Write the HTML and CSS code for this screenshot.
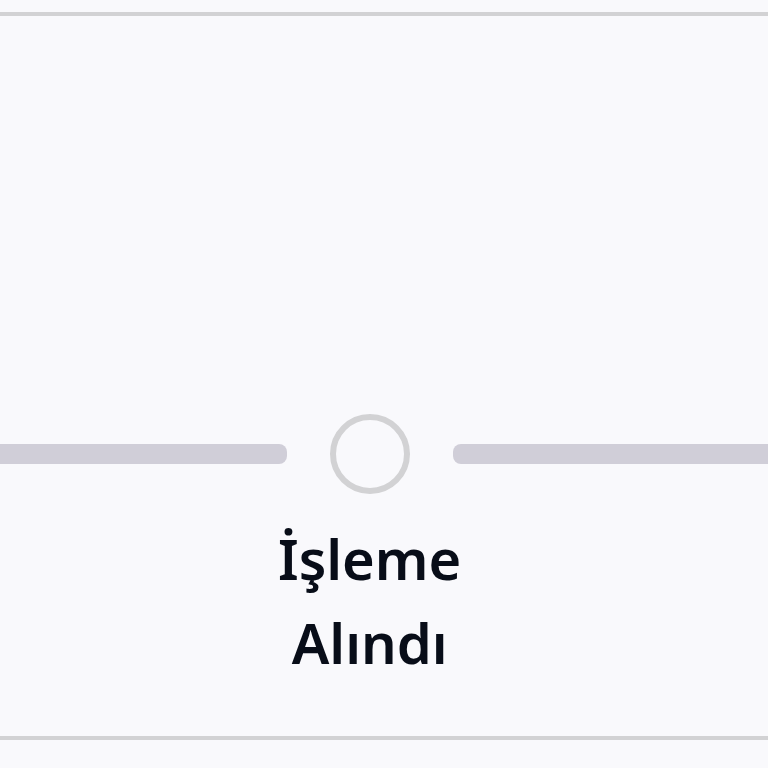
FILE: index.html
```
<!DOCTYPE html>
<html lang="tr">
<head>
    <meta charset="UTF-8">
    <meta name="viewport" content="width=device-width, initial-scale=1.0">
    <title>İşleme Alındı</title>
    <link rel="stylesheet" href="styles.css">
</head>
<body>
    <main class="status-panel">
        <div class="progress">
            <div class="bar bar-left"></div>
            <div class="step-circle"></div>
            <div class="bar bar-right"></div>
            <p class="step-label">İşleme<br>Alındı</p>
        </div>
    </main>
</body>
</html>
```

FILE: styles.css
```
body {
    margin: 0;
    padding: 12px 0;
    background-color: #f9f9fc;
    color: #080d18;
    font-family: "Noto Sans", sans-serif;
}
.status-panel {
    padding: 398px 0 52px;
    border-top: 4px solid #d2d2d4;
    border-bottom: 4px solid #d2d2d4;
}
.progress {
    display: grid;
    grid-template-columns: 10fr 166px 11fr;
    align-items: center;
    row-gap: 22px;
}
.bar {
    height: 20px;
    background-color: #d0ced8;
}
.bar-left {
    border-radius: 0 8px 8px 0;
}
.bar-right {
    border-radius: 8px 0 0 8px;
}
.step-circle {
    justify-self: center;
    box-sizing: border-box;
    width: 80px;
    height: 80px;
    border: 6px solid #d2d2d4;
    border-radius: 50%;
}
.step-label {
    grid-column: 2;
    justify-self: center;
    margin: 0;
    font-size: 56px;
    font-weight: 600;
    line-height: 84px;
    text-align: center;
    white-space: nowrap;
}
```
